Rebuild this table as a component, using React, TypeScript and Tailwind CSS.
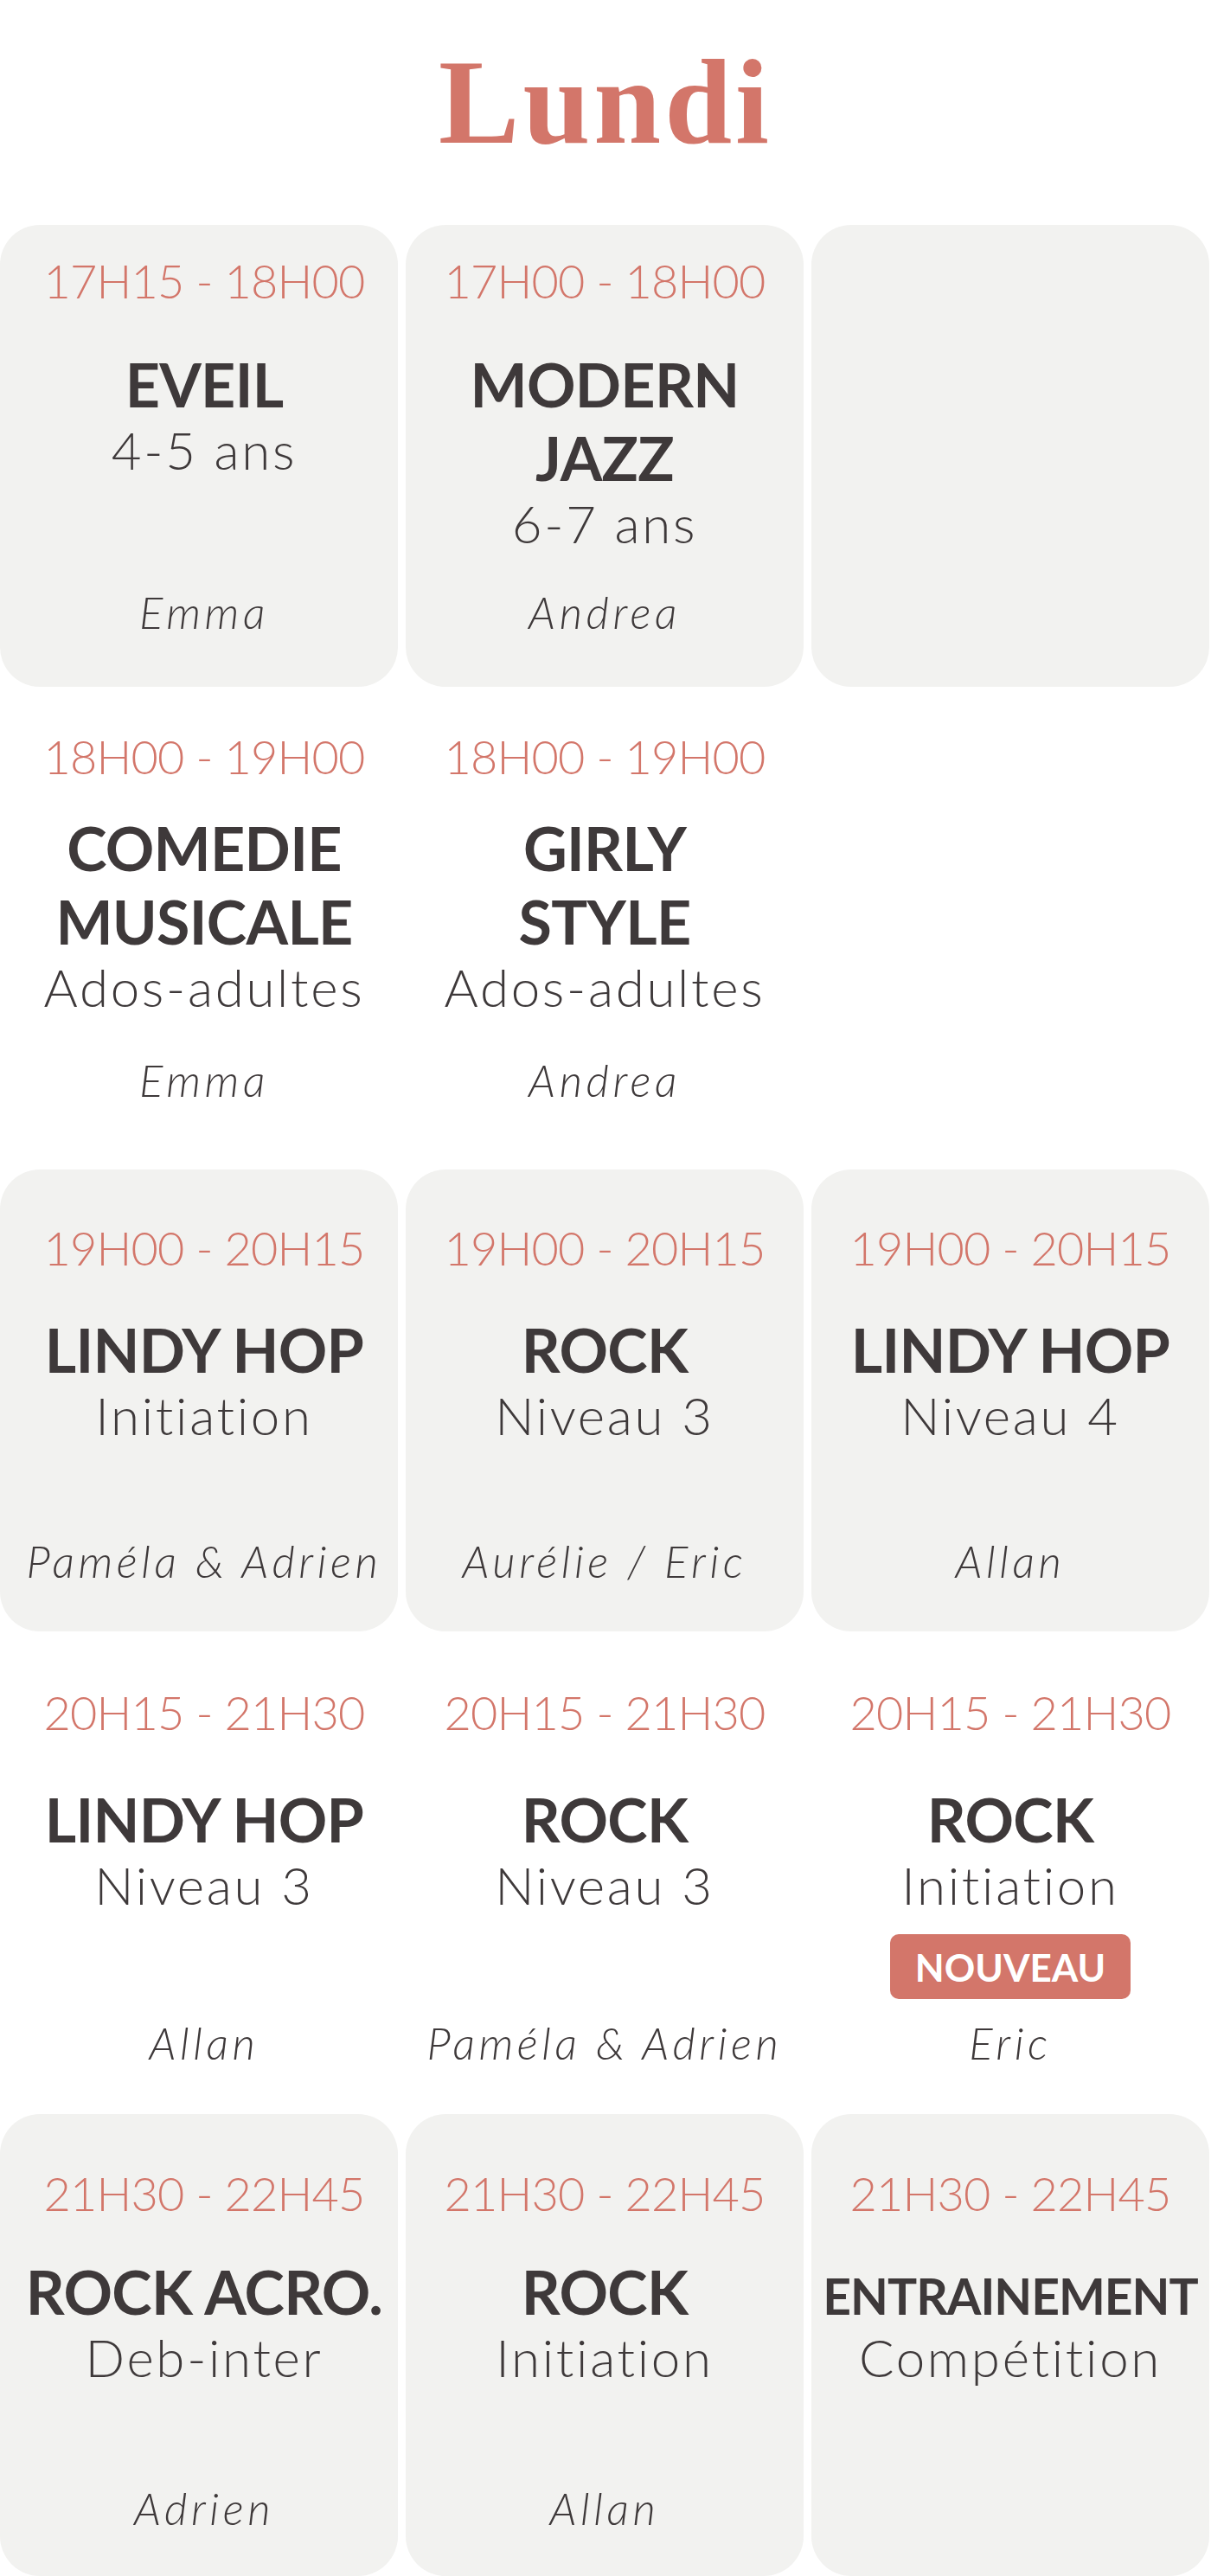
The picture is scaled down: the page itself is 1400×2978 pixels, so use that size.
import React from "react";

type Cell = {
  time: string;
  title: string[];
  sub: string;
  teacher: string;
  badge?: boolean;
  small?: boolean;
} | null;

type Row = {
  bg: boolean;
  timeTop: number;
  titleMt: number;
  teacherMb: number;
  cells: Cell[];
};

const rows: Row[] = [
  {
    bg: true,
    timeTop: 38,
    titleMt: 50,
    teacherMb: 61,
    cells: [
      { time: "17H15 - 18H00", title: ["EVEIL"], sub: "4-5 ans", teacher: "Emma" },
      { time: "17H00 - 18H00", title: ["MODERN", "JAZZ"], sub: "6-7 ans", teacher: "Andrea" },
      { time: "", title: [], sub: "", teacher: "" },
    ],
  },
  {
    bg: false,
    timeTop: 42,
    titleMt: 36,
    teacherMb: 66,
    cells: [
      { time: "18H00 - 19H00", title: ["COMEDIE", "MUSICALE"], sub: "Ados-adultes", teacher: "Emma" },
      { time: "18H00 - 19H00", title: ["GIRLY", "STYLE"], sub: "Ados-adultes", teacher: "Andrea" },
      null,
    ],
  },
  {
    bg: true,
    timeTop: 64,
    titleMt: 48,
    teacherMb: 56,
    cells: [
      { time: "19H00 - 20H15", title: ["LINDY HOP"], sub: "Initiation", teacher: "Paméla & Adrien" },
      { time: "19H00 - 20H15", title: ["ROCK"], sub: "Niveau 3", teacher: "Aurélie / Eric" },
      { time: "19H00 - 20H15", title: ["LINDY HOP"], sub: "Niveau 4", teacher: "Allan" },
    ],
  },
  {
    bg: false,
    timeTop: 55,
    titleMt: 54,
    teacherMb: 45,
    cells: [
      { time: "20H15 - 21H30", title: ["LINDY HOP"], sub: "Niveau 3", teacher: "Allan" },
      { time: "20H15 - 21H30", title: ["ROCK"], sub: "Niveau 3", teacher: "Paméla & Adrien" },
      { time: "20H15 - 21H30", title: ["ROCK"], sub: "Initiation", teacher: "Eric", badge: true },
    ],
  },
  {
    bg: true,
    timeTop: 65,
    titleMt: 44,
    teacherMb: 53,
    cells: [
      { time: "21H30 - 22H45", title: ["ROCK ACRO."], sub: "Deb-inter", teacher: "Adrien" },
      { time: "21H30 - 22H45", title: ["ROCK"], sub: "Initiation", teacher: "Allan" },
      { time: "21H30 - 22H45", title: ["ENTRAINEMENT"], sub: "Compétition", teacher: "", small: true },
    ],
  },
];

function CourseCell({ cell, row, first }: { cell: Cell; row: Row; first: boolean }) {
  const base =
    "h-[534px] flex flex-col items-center text-center " +
    (first ? "pl-[12px] " : "") +
    (row.bg ? "bg-[#f2f2f0] rounded-[46px]" : "");
  if (!cell || !cell.time) {
    return <div className={base} />;
  }
  return (
    <div className={base}>
      <div
        className="text-[54px] leading-[54px] font-light text-[#d3766a] whitespace-nowrap tracking-[-0.8px]"
        style={{ marginTop: row.timeTop }}
      >
        {cell.time}
      </div>
      <div
        className="text-[70px] leading-[85px] font-bold text-[#3e393a] whitespace-nowrap tracking-[-0.01em]"
        style={{ marginTop: row.titleMt }}
      >
        {cell.title.map((t) => (
          <div key={t}>
            {cell.small ? (
              <span className="text-[57px] leading-none tracking-[-1px]">{t}</span>
            ) : (
              t
            )}
          </div>
        ))}
      </div>
      <div className="mt-[3px] text-[60px] leading-[60px] font-light text-[#3e393a] whitespace-nowrap tracking-[0.045em]">
        {cell.sub}
      </div>
      {cell.badge && (
        <div className="mt-[27px] h-[75px] w-[278px] rounded-[10px] bg-[#d3766a] text-white font-bold text-[44px] leading-none flex items-center justify-center">
          NOUVEAU
        </div>
      )}
      <div
        className="mt-auto text-[51px] leading-[50px] font-light italic text-[#3e393a] whitespace-nowrap tracking-[0.09em]"
        style={{ marginBottom: row.teacherMb }}
      >
        {cell.teacher}
      </div>
    </div>
  );
}

export default function App() {
  return (
    <div className="w-[1400px] h-[2978px] overflow-hidden bg-white font-[Lato,sans-serif]">
      <h1 className="pt-[48px] h-[260px] text-center text-[140px] leading-[140px] font-bold text-[#d3766a] font-['Liberation_Serif',serif] tracking-[4px]">
        Lundi
      </h1>
      <div className="grid grid-cols-3 gap-x-[9px] gap-y-[12px] w-[1398px]">
        {rows.map((row, ri) =>
          row.cells.map((cell, ci) => (
            <CourseCell key={ri + "-" + ci} cell={cell} row={row} first={ci === 0} />
          ))
        )}
      </div>
    </div>
  );
}
